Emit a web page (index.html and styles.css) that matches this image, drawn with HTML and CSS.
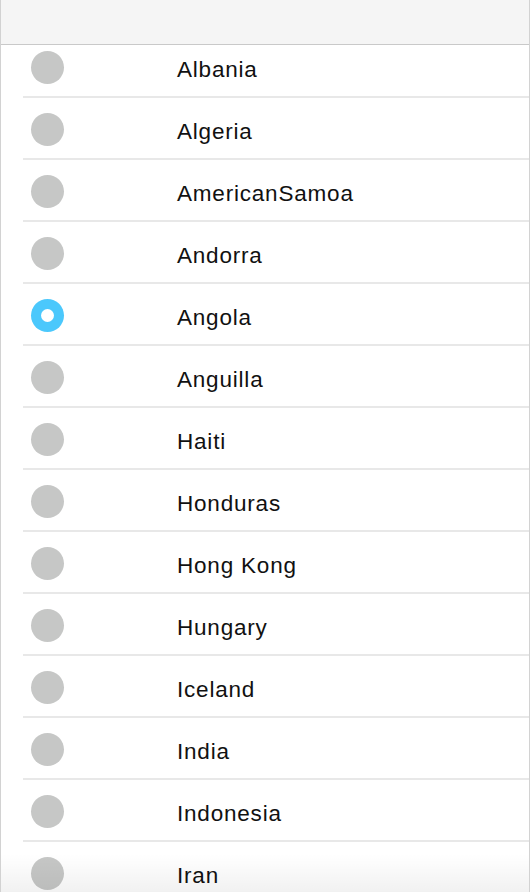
FILE: index.html
```html
<!DOCTYPE html>
<html>
<head>
<meta charset="utf-8">
<link rel="stylesheet" href="styles.css">
</head>
<body>
<div class="screen">
  <header class="navbar"></header>
  <main class="viewport">
    <ul class="list">
      <li class="row"><span class="radio"></span><span class="name">Albania</span></li>
      <li class="row"><span class="radio"></span><span class="name">Algeria</span></li>
      <li class="row"><span class="radio"></span><span class="name">AmericanSamoa</span></li>
      <li class="row"><span class="radio"></span><span class="name">Andorra</span></li>
      <li class="row"><span class="radio checked"></span><span class="name">Angola</span></li>
      <li class="row"><span class="radio"></span><span class="name">Anguilla</span></li>
      <li class="row"><span class="radio"></span><span class="name">Haiti</span></li>
      <li class="row"><span class="radio"></span><span class="name">Honduras</span></li>
      <li class="row"><span class="radio"></span><span class="name">Hong Kong</span></li>
      <li class="row"><span class="radio"></span><span class="name">Hungary</span></li>
      <li class="row"><span class="radio"></span><span class="name">Iceland</span></li>
      <li class="row"><span class="radio"></span><span class="name">India</span></li>
      <li class="row"><span class="radio"></span><span class="name">Indonesia</span></li>
      <li class="row"><span class="radio"></span><span class="name">Iran</span></li>
      <li class="row"><span class="radio"></span><span class="name">Iraq</span></li>
    </ul>
    <div class="fade"></div>
  </main>
</div>
</body>
</html>
```

FILE: styles.css
```css
* { box-sizing: border-box; }
html, body { margin: 0; padding: 0; background: #fff; }
body {
  font-family: "Liberation Sans", Arial, sans-serif;
  color: #111;
}
.screen {
  width: 530px;
  height: 892px;
  display: flex;
  flex-direction: column;
  border-left: 1px solid #d2d2d2;
  border-right: 1px solid #d2d2d2;
  overflow: hidden;
}
.navbar {
  height: 45px;
  flex: none;
  background: #f5f5f5;
  border-bottom: 1px solid #c9c9c9;
}
.viewport {
  flex: 1;
  position: relative;
  overflow: hidden;
}
.list {
  list-style: none;
  margin: -9px 0 0 22px;
  padding: 0;
}
.row {
  height: 62px;
  border-bottom: 2px solid #e8e8e8;
  display: flex;
  align-items: flex-start;
}
.radio {
  flex: none;
  width: 33px;
  height: 33px;
  margin: 15px 0 0 8px;
  border-radius: 50%;
  background: #c6c7c6;
}
.radio.checked {
  background: #4bc8fc;
  position: relative;
}
.radio.checked::after {
  content: "";
  position: absolute;
  left: 10px;
  top: 10px;
  width: 13px;
  height: 13px;
  border-radius: 50%;
  background: #fff;
}
.name {
  margin: 22px 0 0 113px;
  font-size: 22.5px;
  line-height: 24px;
  letter-spacing: 0.8px;
  color: #111;
}
.fade {
  position: absolute;
  left: 0;
  right: 0;
  bottom: 0;
  height: 38px;
  background: linear-gradient(to bottom, rgba(0,0,0,0), rgba(0,0,0,0.055));
}
```
